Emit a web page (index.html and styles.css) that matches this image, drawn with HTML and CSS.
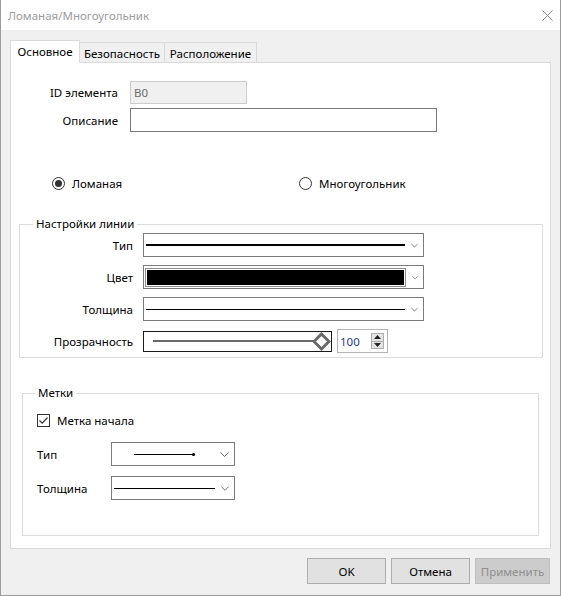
FILE: index.html
```html
<!DOCTYPE html>
<html lang="ru">

<head>
    <meta charset="UTF-8">
    <meta name="viewport" content="width=device-width, initial-scale=1.0">
    <title>Ломаная/Многоугольник</title>
    <link rel="stylesheet" href="styles.css">
</head>

<body>
    <!-- окно диалога -->
    <div class="window">
        <div class="titlebar">
            <span class="title">Ломаная/Многоугольник</span>
            <svg class="close" width="11" height="11" viewBox="0 0 11 11">
                <path d="M0.5 0.5 L10.5 10.5 M10.5 0.5 L0.5 10.5" stroke="#8a8a8a" stroke-width="1" fill="none" />
            </svg>
        </div>

        <div class="body">
            <!-- вкладки -->
            <div class="tabs">
                <div class="tab tab-active">Основное</div>
                <div class="tab tab-second">Безопасность</div>
                <div class="tab tab-third">Расположение</div>
            </div>

            <div class="panel">
                <div class="fields">
                    <div class="field-row">
                        <span class="field-label">ID элемента</span>
                        <div class="input input-readonly">B0</div>
                    </div>
                    <div class="field-row">
                        <span class="field-label">Описание</span>
                        <div class="input input-wide"></div>
                    </div>
                </div>

                <div class="radios">
                    <div class="radio-item radio-first">
                        <span class="radio radio-checked"></span>
                        <span>Ломаная</span>
                    </div>
                    <div class="radio-item">
                        <span class="radio"></span>
                        <span>Многоугольник</span>
                    </div>
                </div>

                <!-- настройки линии -->
                <fieldset class="group group-line">
                    <legend>Настройки линии</legend>
                    <div class="line-row">
                        <span class="line-label">Тип</span>
                        <div class="combo">
                            <div class="combo-value"><span class="stroke stroke-thick"></span></div>
                            <svg class="chevron" width="9" height="5" viewBox="0 0 9 5">
                                <path d="M0.5 0.5 L4.5 4.5 L8.5 0.5" stroke="#606060" fill="none" />
                            </svg>
                        </div>
                    </div>
                    <div class="line-row">
                        <span class="line-label">Цвет</span>
                        <div class="combo">
                            <div class="combo-value"><span class="color-swatch"></span></div>
                            <svg class="chevron" width="9" height="5" viewBox="0 0 9 5">
                                <path d="M0.5 0.5 L4.5 4.5 L8.5 0.5" stroke="#606060" fill="none" />
                            </svg>
                        </div>
                    </div>
                    <div class="line-row">
                        <span class="line-label">Толщина</span>
                        <div class="combo">
                            <div class="combo-value"><span class="stroke stroke-thin"></span></div>
                            <svg class="chevron" width="9" height="5" viewBox="0 0 9 5">
                                <path d="M0.5 0.5 L4.5 4.5 L8.5 0.5" stroke="#606060" fill="none" />
                            </svg>
                        </div>
                    </div>
                    <div class="line-row">
                        <span class="line-label">Прозрачность</span>
                        <div class="slider">
                            <span class="slider-track"></span>
                            <svg class="slider-thumb" width="19" height="19" viewBox="0 0 19 19">
                                <path d="M9.5 2 L17 9.5 L9.5 17 L2 9.5 Z" stroke="#6a6a6a" stroke-width="3" fill="#fff" />
                            </svg>
                        </div>
                        <div class="spin">
                            <span class="spin-value">100</span>
                            <div class="spin-buttons">
                                <span class="spin-btn">
                                    <svg width="7" height="4" viewBox="0 0 7 4"><path d="M0 4 L3.5 0 L7 4 Z" fill="#222" /></svg>
                                </span>
                                <span class="spin-btn">
                                    <svg width="7" height="4" viewBox="0 0 7 4"><path d="M0 0 L3.5 4 L7 0 Z" fill="#222" /></svg>
                                </span>
                            </div>
                        </div>
                    </div>
                </fieldset>

                <!-- метки -->
                <fieldset class="group group-marks">
                    <legend>Метки</legend>
                    <div class="check-row">
                        <span class="checkbox">
                            <svg width="11" height="11" viewBox="0 0 11 11">
                                <path d="M1.5 5.5 L4.2 8.2 L9.5 2.5" stroke="#333" stroke-width="1.2" fill="none" />
                            </svg>
                        </span>
                        <span>Метка начала</span>
                    </div>
                    <div class="mark-row mark-type">
                        <span class="mark-label">Тип</span>
                        <div class="combo combo-small">
                            <div class="combo-value combo-arrow">
                                <svg width="62" height="5" viewBox="0 0 62 5">
                                    <path d="M0 2.5 L59 2.5" stroke="#000" stroke-width="1" />
                                    <circle cx="59.5" cy="2.5" r="1.6" fill="#000" />
                                </svg>
                            </div>
                            <svg class="chevron" width="9" height="5" viewBox="0 0 9 5">
                                <path d="M0.5 0.5 L4.5 4.5 L8.5 0.5" stroke="#606060" fill="none" />
                            </svg>
                        </div>
                    </div>
                    <div class="mark-row">
                        <span class="mark-label">Толщина</span>
                        <div class="combo combo-small">
                            <div class="combo-value combo-width"><span class="stroke stroke-thin"></span></div>
                            <svg class="chevron" width="9" height="5" viewBox="0 0 9 5">
                                <path d="M0.5 0.5 L4.5 4.5 L8.5 0.5" stroke="#606060" fill="none" />
                            </svg>
                        </div>
                    </div>
                </fieldset>
            </div>

            <!-- кнопки -->
            <div class="buttons">
                <button class="btn btn-ok">OK</button>
                <button class="btn">Отмена</button>
                <button class="btn btn-disabled">Применить</button>
            </div>
        </div>
    </div>
</body>

</html>
```

FILE: styles.css
```css
* {
    margin: 0;
    padding: 0;
    box-sizing: border-box;
}

body {
    width: 561px;
    height: 596px;
    font-family: "Segoe UI", "Noto Sans", sans-serif;
    font-size: 11.5px;
    color: #000;
    background: #fff;
    overflow: hidden;
}

.window {
    display: flex;
    flex-direction: column;
    width: 561px;
    height: 596px;
    border: 1px solid #9c9c9c;
    border-top: none;
}

/* заголовок окна */
.titlebar {
    display: flex;
    align-items: center;
    justify-content: space-between;
    height: 30px;
    padding-left: 7px;
    padding-right: 7px;
    background: #fff;
}

.title {
    color: #9d9d9d;
}

.close {
    display: block;
}

.body {
    flex: 1;
    display: flex;
    flex-direction: column;
    padding: 10px 9px 0 9px;
    background: #f0f0f0;
}

/* вкладки */
.tabs {
    display: flex;
    align-items: flex-end;
    height: 22px;
}

.tab {
    display: flex;
    align-items: center;
    justify-content: center;
    height: 20px;
    border: 1px solid #d9d9d9;
    border-bottom: none;
    background: #f0f0f0;
    padding-top: 1px;
}

.tab-active {
    position: relative;
    z-index: 1;
    width: 70px;
    height: 23px;
    margin-bottom: -1px;
    background: #fff;
    padding-top: 0;
    padding-bottom: 2px;
}

.tab-second {
    width: 85px;
    border-left: none;
}

.tab-third {
    width: 92px;
    border-left: none;
}

.panel {
    width: 541px;
    height: 487px;
    border: 1px solid #d9d9d9;
    background: #fff;
}

/* поля ID и описания */
.fields {
    display: flex;
    flex-direction: column;
    gap: 4px;
    padding-top: 18px;
}

.field-row {
    display: flex;
    align-items: center;
    gap: 12px;
}

.field-label {
    width: 107px;
    text-align: right;
}

.input {
    height: 24px;
    border: 1px solid #7a7a7a;
    background: #fff;
    padding-left: 3px;
    line-height: 21px;
}

.input-readonly {
    width: 117px;
    height: 23px;
    border-color: #cccccc;
    background: #f0f0f0;
    color: #6d6d6d;
}

.input-wide {
    width: 307px;
}

/* переключатели */
.radios {
    display: flex;
    align-items: center;
    height: 16px;
    margin-top: 43px;
    padding-left: 41px;
}

.radio-item {
    display: flex;
    align-items: center;
    gap: 7px;
}

.radio-first {
    width: 247px;
}

.radio {
    display: flex;
    align-items: center;
    justify-content: center;
    width: 13px;
    height: 13px;
    border: 1px solid #333;
    border-radius: 50%;
    background: #fff;
}

.radio-checked::after {
    content: '';
    width: 7px;
    height: 7px;
    border-radius: 50%;
    background: #333;
}

/* группы */
.group {
    border: 1px solid #dcdcdc;
    min-width: 0;
}

.group legend {
    padding: 0 3px;
    line-height: 16px;
}

.group-line {
    width: 524px;
    margin-left: 8px;
    margin-top: 25px;
    padding: 1px 12px 4px 13px;
    display: flex;
    flex-direction: column;
    gap: 8px;
}

.line-row {
    display: flex;
    align-items: center;
    height: 24px;
}

.line-label {
    width: 100px;
    margin-right: 10px;
    text-align: right;
}

.combo {
    display: flex;
    align-items: center;
    width: 281px;
    height: 24px;
    border: 1px solid #7a7a7a;
    background: #fff;
}

.combo-value {
    flex: 1;
    display: flex;
    align-items: center;
    height: 100%;
    padding-left: 2px;
}

.chevron {
    display: block;
    margin: 0 5px 0 6px;
}

.stroke {
    display: block;
    width: 259px;
    background: #000;
}

.stroke-thick {
    height: 2px;
}

.stroke-thin {
    height: 1px;
}

.color-swatch {
    display: block;
    width: 261px;
    height: 19px;
    margin-left: -1px;
    border: 1px solid #8c8c8c;
    background: #000;
    box-shadow: inset 0 0 0 1px #fff;
}

/* ползунок прозрачности */
.slider {
    position: relative;
    display: flex;
    align-items: center;
    width: 189px;
    height: 21px;
    border: 1px solid #1a1a1a;
    background: #fff;
    padding-left: 9px;
}

.slider-track {
    display: block;
    width: 165px;
    height: 2px;
    background: #6a6a6a;
}

.slider-thumb {
    position: absolute;
    right: 0;
    top: 0;
}

.spin {
    display: flex;
    align-items: center;
    justify-content: space-between;
    width: 51px;
    height: 24px;
    margin-left: 5px;
    border: 1px solid #b4b4b4;
    background: #fff;
    padding: 0 3px 0 2px;
}

.spin-value {
    color: #1c3c9c;
}

.spin-buttons {
    display: flex;
    flex-direction: column;
    width: 13px;
    height: 16px;
    border: 1px solid #adadad;
}

.spin-btn {
    flex: 1;
    display: flex;
    align-items: center;
    justify-content: center;
    background: #e5e5e5;
}

.spin-btn + .spin-btn {
    border-top: 1px solid #adadad;
}

.spin-btn svg {
    display: block;
}

/* группа меток */
.group-marks {
    width: 517px;
    margin-left: 11px;
    margin-top: 27px;
    padding: 11px 12px 35px 12px;
}

.check-row {
    display: flex;
    align-items: center;
    gap: 7px;
    height: 16px;
    margin-left: 2px;
}

.checkbox {
    display: flex;
    align-items: center;
    justify-content: center;
    width: 13px;
    height: 13px;
    border: 1px solid #333;
    background: #fff;
}

.checkbox svg {
    display: block;
}

.mark-row {
    display: flex;
    align-items: center;
    height: 24px;
    margin-top: 10px;
    margin-left: 2px;
}

.mark-type {
    margin-top: 14px;
}

.mark-label {
    width: 74px;
}

.combo-small {
    width: 124px;
}

.combo-arrow {
    padding-left: 22px;
}

.combo-arrow svg {
    display: block;
}

.combo-width .stroke {
    width: 101px;
}

/* кнопки диалога */
.buttons {
    display: flex;
    justify-content: flex-end;
    gap: 5px;
    margin-top: 9px;
    padding-right: 1px;
}

.btn {
    width: 79px;
    height: 26px;
    border: 1px solid #adadad;
    background: #e1e1e1;
    font-family: inherit;
    font-size: 11.5px;
    color: #000;
}

.btn-disabled {
    width: 75px;
    border-color: #bfbfbf;
    background: #cccccc;
    color: #8f8f8f;
}
```
